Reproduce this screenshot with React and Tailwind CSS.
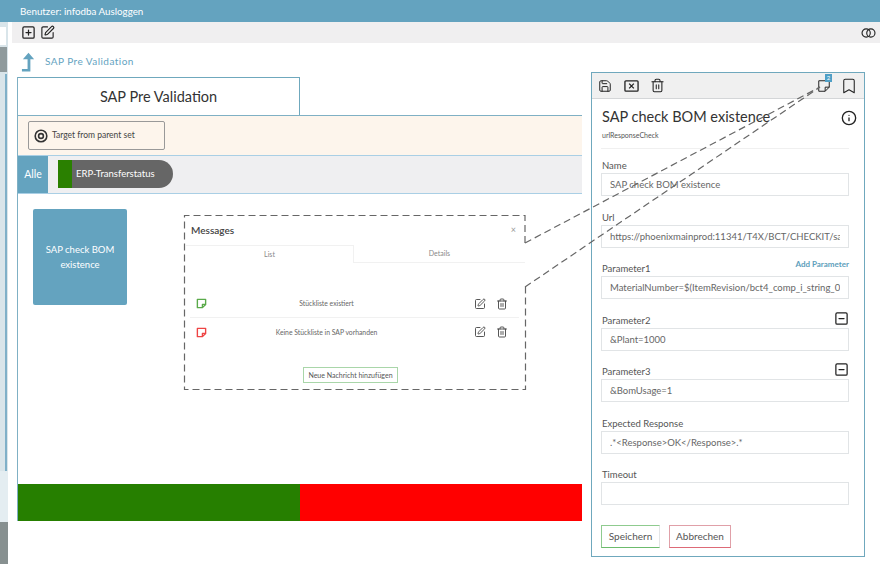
import React from "react";
import { SquarePlus, SquarePen, Save, Trash2, Bookmark, Info, SquareMinus } from "lucide-react";

const fields = [
    { label: "Name", value: "SAP check BOM existence", mt: "mt-[10px]" },
    { label: "Url", value: "https://phoenixmainprod:11341/T4X/BCT/CHECKIT/sap/bc/srt/rfc/sap", mt: "mt-[14.5px]" },
    { label: "Parameter1", value: "MaterialNumber=$(ItemRevision/bct4_comp_i_string_01)", mt: "mt-[14.5px]", add: true },
    { label: "Parameter2", value: "&Plant=1000", mt: "mt-[14.5px]", minus: true },
    { label: "Parameter3", value: "&BomUsage=1", mt: "mt-[14.5px]", minus: true },
    { label: "Expected Response", value: ".*<Response>OK</Response>.*", mt: "mt-[14.5px]" },
    { label: "Timeout", value: "", mt: "mt-[14.5px]" },
];

const Note = ({ className, width = "2.5" }) => (
    <svg viewBox="0 0 24 24" fill="none" stroke="currentColor" strokeWidth={width} strokeLinejoin="round" className={className}>
        <path d="M3 3h18v11l-7 7H3z" />
        <path d="M21 14h-7v7" />
    </svg>
);

const Field = ({ label, value, mt, add, minus }) => (
    <div className={mt}>
        <div className="flex h-[13px] items-center justify-between pl-[1px] text-[9.5px] leading-[13px] text-[#555]">
            <span>{label}</span>
            {add && <span className="relative top-[-4px] text-[8px] font-bold text-[#5d9ebb]">Add Parameter</span>}
            {minus && <SquareMinus size={15} strokeWidth={2} className="relative top-[-2px] text-[#222]" />}
        </div>
        <input
            readOnly
            defaultValue={value}
            className="mt-[1px] block h-[23px] w-[248px] border border-[#e1e4e6] bg-white pl-[8px] pr-[8px] text-[9.5px] text-[#666] outline-none"
        />
    </div>
);

const MessageRow = ({ color, text, border }) => (
    <div className={`flex h-[28px] items-center pl-[6px] pr-[11px] ${border ? "border-b border-[#f1f1f1]" : ""}`}>
        <Note className={`h-[11px] w-[11px] ${color}`} width="3" />
        <span className="flex-1 pr-[28px] text-center text-[6.8px] text-[#666]">{text}</span>
        <SquarePen size={12} strokeWidth={1.8} className="text-[#444]" />
        <Trash2 size={12} strokeWidth={1.8} className="ml-[10px] text-[#444]" />
    </div>
);

const App = () => {
    return (
        <div className="relative flex h-[564px] w-[880px] flex-col overflow-hidden bg-white font-['Lato',sans-serif]">
            <header className="flex h-[22px] shrink-0 items-center bg-[#64a3bf] pl-[20px] text-[9.8px] text-white">
                Benutzer: infodba Ausloggen
            </header>

            <div className="flex flex-1">
                {/* linke Leiste */}
                <div className="flex w-[8px] shrink-0 flex-col bg-[#d9e5ea]">
                    <div className="h-[5px]" />
                    <div className="h-[18px] w-[6px] bg-white" />
                    <div className="mt-[2px] h-[25px] w-[7px] bg-[#8f9a9c]" />
                    <div className="flex h-[399px] justify-end pr-[1px]">
                        <div className="mt-[2px] w-[2px] bg-[#7fb0c8]" />
                    </div>
                    <div className="flex-1 bg-[#e4edf1]" />
                    <div className="h-[42px] w-[8px] bg-[#879090]" />
                </div>

                <div className="flex flex-1 flex-col">
                    <div className="ml-[4px] flex h-[21px] items-center bg-[#f0eff0] pl-[9px] pr-[4px] text-[#222]">
                        <SquarePlus size={15} strokeWidth={2} />
                        <SquarePen size={15} strokeWidth={1.8} className="ml-[4px]" />
                        <svg viewBox="0 0 16 10" className="ml-auto h-[10px] w-[15px]" fill="none" stroke="currentColor" strokeWidth="1.2">
                            <circle cx="5.5" cy="5" r="4.4" />
                            <circle cx="10.5" cy="5" r="4.4" />
                        </svg>
                    </div>

                    <div className="flex h-[34px] items-center pl-[13px] pt-[3px]">
                        <svg viewBox="0 0 16 20" className="h-[20px] w-[15px] text-[#64a3bf]" fill="currentColor">
                            <path d="M8 0l6 7h-4v13H1v-2.6h6V7H2z" />
                        </svg>
                        <span className="ml-[9px] text-[10px] tracking-[0.45px] text-[#64a3bf]">SAP Pre Validation</span>
                    </div>

                    <div className="ml-[9px] flex w-[565px] flex-col border-l border-[#7fb0c4]">
                        <div className="flex h-[38px] w-[282px] items-center justify-center border-t border-r border-[#6fa8bd] text-[14.5px] text-[#333]">
                            SAP Pre Validation
                        </div>
                        <div className="flex h-[40px] items-start border-t border-[#7fb0c4] bg-[#fdf5ec] pl-[10px] pt-[5px]">
                            <div className="flex h-[29px] w-[137px] items-center rounded-[2px] border border-[#999] pl-[5px] text-[8.5px] text-[#444]">
                                <svg viewBox="0 0 14 14" className="h-[14px] w-[14px] text-[#333]" fill="none" stroke="currentColor">
                                    <circle cx="7" cy="7" r="5.8" strokeWidth="1.6" />
                                    <circle cx="7" cy="7" r="2.4" strokeWidth="1.6" />
                                </svg>
                                <span className="ml-[4px]">Target from parent set</span>
                            </div>
                        </div>
                        <div className="flex h-[39px] items-stretch border-y border-[#a9cfe5] bg-[#efeff1]">
                            <div className="flex w-[30px] items-center justify-center bg-[#64a3bf] text-[10.5px] text-white">Alle</div>
                            <div className="ml-[10px] mt-[4px] flex h-[28px] w-[115px] overflow-hidden rounded-l-[2px] rounded-r-full bg-[#666]">
                                <div className="w-[14px] bg-[#2a8000]" />
                                <span className="ml-[4px] self-center text-[9.5px] text-white">ERP-Transferstatus</span>
                            </div>
                        </div>

                        <div className="flex h-[290px] items-start pl-[15px] pt-[15px]">
                            <div className="flex h-[96px] w-[94px] items-center justify-center rounded-[2px] bg-[#64a3bf] px-[10px] text-center text-[9.5px] leading-[15px] text-white">
                                SAP check BOM existence
                            </div>
                            <div className="ml-[57px] mt-[6px] flex h-[175px] w-[341px] flex-col">
                                <div className="flex h-[30px] shrink-0 items-center justify-between pl-[7px] pr-[9px]">
                                    <span className="text-[10px] font-semibold text-[#444]">Messages</span>
                                    <span className="text-[9px] text-[#999]">×</span>
                                </div>
                                <div className="flex h-[18px] shrink-0 pl-[2px] text-[7px] text-[#888]">
                                    <div className="flex w-[168px] items-center justify-center border-t border-r border-[#f1f1f1]">List</div>
                                    <div className="flex flex-1 items-center justify-center border-b border-[#f1f1f1]">Details</div>
                                </div>
                                <div className="px-[6px] pt-[27px]">
                                    <MessageRow color="text-[#5aaa4a]" text="Stückliste existiert" border />
                                    <MessageRow color="text-[#ee4444]" text="Keine Stückliste in SAP vorhanden" />
                                </div>
                                <div className="mt-[21px] flex justify-center pr-[8px]">
                                    <div className="flex h-[16px] w-[95px] items-center justify-center whitespace-nowrap border border-[#a9d6a9] text-[7px] text-[#555]">
                                        Neue Nachricht hinzufügen
                                    </div>
                                </div>
                            </div>
                        </div>

                        <div className="flex h-[37px]">
                            <div className="w-[282px] bg-[#267f00]" />
                            <div className="flex-1 bg-[#ff0000]" />
                        </div>
                    </div>
                </div>
            </div>

            {/* Detail Panel */}
            <aside className="absolute left-[591px] top-[72px] flex h-[485px] w-[274px] flex-col border border-[#6fa8bd] bg-white">
                <div className="flex h-[26px] shrink-0 items-center border-b border-[#d4d6d8] bg-[#f0f0f0] pl-[6px] pr-[6px] text-[#222]">
                    <Save size={14} strokeWidth={1.7} />
                    <svg viewBox="0 0 16 14" className="ml-[12px] h-[14px] w-[15px]" fill="none" stroke="currentColor" strokeWidth="1.4">
                        <rect x="1" y="1.5" width="14" height="11" rx="1" />
                        <path d="M5.5 4.5l5 5M10.5 4.5l-5 5" />
                    </svg>
                    <Trash2 size={15} strokeWidth={1.7} className="ml-[11px]" />
                    <div className="relative ml-auto h-[14px] w-[14px]">
                        <Note className="h-[14px] w-[14px]" width="1.7" />
                        <span className="absolute left-[8px] top-[-5px] flex h-[8px] w-[7px] items-center justify-center bg-[#4f9fc6] text-[6px] text-white">2</span>
                    </div>
                    <Bookmark size={18} strokeWidth={1.4} className="ml-[9px]" />
                </div>

                <div className="flex flex-1 flex-col pl-[9px] pr-[15px]">
                    <div className="mt-[6px] flex items-center justify-between pl-[1px]">
                        <span className="text-[14.5px] leading-[24px] text-[#333]">SAP check BOM existence</span>
                        <Info size={16} strokeWidth={2} className="relative top-[1px] mr-[-8px] text-[#222]" />
                    </div>
                    <div className="mt-[1px] pl-[1px] text-[7px] leading-[10px] text-[#555]">urlResponseCheck</div>
                    <div className="mt-[8px] w-[248px] border-b border-[#f0f0f0]" />
                    {fields.map((f) => (
                        <Field key={f.label} {...f} />
                    ))}
                    <div className="mt-[20px] flex text-[10px] text-[#555]">
                        <button className="flex h-[23px] w-[59px] items-center justify-center border border-[#8fcb8f] border-r-[#e3e5e6] border-b-[#6cbb6c]">Speichern</button>
                        <button className="ml-[9px] flex h-[23px] w-[62px] items-center justify-center border border-[#e0a0a8] border-b-[#dd6a77]">Abbrechen</button>
                    </div>
                </div>
            </aside>

            {/* gestrichelte Verbindung */}
            <svg className="pointer-events-none absolute left-0 top-0" width="880" height="564" fill="none" stroke="#666" strokeWidth="1.2" strokeDasharray="7 4">
                <path d="M525 243V215.5H184.5V389.5H525.5V287" />
                <path d="M525 243L820 87" />
                <path d="M525 287L820 87" />
            </svg>
        </div>
    );
};

export default App;
